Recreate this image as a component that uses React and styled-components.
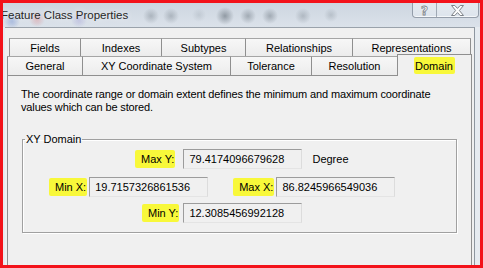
import React from 'react';
import styled, { createGlobalStyle } from 'styled-components';

const GlobalStyle = createGlobalStyle`
    html, body {
        margin: 0;
        padding: 0;
        background: #fff;
    }
    body {
        font-family: "Liberation Sans", Arial, sans-serif;
        font-size: 11px;
        color: #000;
    }
`;

const topTabs = [
    { label: 'Fields', width: 71 },
    { label: 'Indexes', width: 81 },
    { label: 'Subtypes', width: 84 },
    { label: 'Relationships', width: 107 },
    { label: 'Representations', width: 119 },
];

const bottomTabs = [
    { label: 'General', width: 75 },
    { label: 'XY Coordinate System', width: 148 },
    { label: 'Tolerance', width: 81 },
    { label: 'Resolution', width: 86 },
    { label: 'Domain', width: 75, active: true },
];

const CloseGlyph = () => (
    <svg width="13" height="11" viewBox="0 0 13 11">
        <polygon
            points="0.5,0.5 3.8,0.5 6.5,3.4 9.2,0.5 12.5,0.5 8.4,5.5 12.5,10.5 9.2,10.5 6.5,7.6 3.8,10.5 0.5,10.5 4.6,5.5"
            fill="#fdfdfd"
            stroke="#7d8288"
            strokeWidth="1"
        />
    </svg>
);

const Field = ({ label, value, gap }) => (
    <FieldWrap $gap={gap}>
        <Marker>{label}</Marker>
        <ValueBox>{value}</ValueBox>
    </FieldWrap>
);

export default function App() {
    return (
        <>
            <GlobalStyle />
            <Window>
                <TitleBar>
                    <Title>Feature Class Properties</Title>
                    <CaptionButtons>
                        <HelpButton>?</HelpButton>
                        <CloseButton>
                            <CloseGlyph />
                        </CloseButton>
                    </CaptionButtons>
                </TitleBar>
                <Frame>
                    <Client>
                        <Tabs>
                            <TabRow $indent={2}>
                                {topTabs.map((t, i) => (
                                    <Tab
                                        key={t.label}
                                        $w={t.width}
                                        $last={i === topTabs.length - 1}
                                    >
                                        {t.label}
                                    </Tab>
                                ))}
                            </TabRow>
                            <TabRow $indent={0} $front>
                                {bottomTabs.map((t) =>
                                    t.active ? (
                                        <ActiveTab key={t.label} $w={t.width}>
                                            <Marker $tab>{t.label}</Marker>
                                        </ActiveTab>
                                    ) : (
                                        <Tab key={t.label} $w={t.width}>
                                            {t.label}
                                        </Tab>
                                    )
                                )}
                            </TabRow>
                            <Panel>
                                <Description>
                                    The coordinate range or domain extent
                                    defines the minimum and maximum coordinate
                                    <br />
                                    values which can be stored.
                                </Description>
                                <GroupBox>
                                    <Legend>XY Domain</Legend>
                                    <FieldRow $indent={112} $top={3}>
                                        <Field
                                            label="Max Y:"
                                            value="79.4174096679628"
                                            gap={8}
                                        />
                                        <Unit>Degree</Unit>
                                    </FieldRow>
                                    <FieldRow $indent={26} $top={8}>
                                        <Field
                                            label="Min X:"
                                            value="19.7157326861536"
                                            gap={2}
                                        />
                                        <Spacer />
                                        <Field
                                            label="Max X:"
                                            value="86.8245966549036"
                                            gap={2}
                                        />
                                    </FieldRow>
                                    <FieldRow $indent={119} $top={6}>
                                        <Field
                                            label="Min Y:"
                                            value="12.3085456992128"
                                            gap={4}
                                        />
                                    </FieldRow>
                                </GroupBox>
                            </Panel>
                        </Tabs>
                    </Client>
                </Frame>
            </Window>
        </>
    );
}

const Window = styled.div`
    width: 483px;
    height: 268px;
    box-sizing: border-box;
    border: 3px solid #f3121a;
    background: #e6ebf0;
    display: flex;
    flex-direction: column;
    overflow: hidden;
`;

const TitleBar = styled.div`
    height: 24px;
    flex: none;
    display: flex;
    justify-content: space-between;
    align-items: flex-start;
    background:
        radial-gradient(circle at 9px 18px, rgba(70, 110, 200, 0.35), transparent 8px),
        radial-gradient(circle at 34px 16px, rgba(220, 80, 80, 0.3), transparent 8px),
        radial-gradient(circle at 76px 17px, rgba(120, 110, 200, 0.25), transparent 8px),
        radial-gradient(circle at 148px 13px, rgba(110, 120, 130, 0.4), transparent 8px),
        radial-gradient(circle at 168px 13px, rgba(110, 120, 130, 0.4), transparent 8px),
        radial-gradient(circle at 196px 12px, rgba(150, 160, 170, 0.3), transparent 7px),
        radial-gradient(circle at 222px 13px, rgba(90, 100, 110, 0.55), transparent 9px),
        radial-gradient(circle at 245px 13px, rgba(100, 110, 120, 0.45), transparent 8px),
        radial-gradient(circle at 267px 13px, rgba(100, 110, 120, 0.45), transparent 8px),
        radial-gradient(circle at 300px 13px, rgba(120, 130, 140, 0.4), transparent 8px),
        radial-gradient(circle at 328px 12px, rgba(130, 140, 150, 0.35), transparent 7px),
        linear-gradient(180deg, #cdd6e0 0%, #dbe2ea 100%);
`;

const Title = styled.div`
    margin-left: -2px;
    padding-top: 5px;
    font-size: 11.5px;
    line-height: 14px;
    color: #262626;
    text-shadow: 0 0 6px rgba(255, 255, 255, 0.95);
    white-space: nowrap;
`;

const CaptionButtons = styled.div`
    display: flex;
    margin-right: 1px;
    height: 14px;
    border: 1px solid rgba(95, 108, 124, 0.6);
    border-top: none;
    border-radius: 0 0 4px 4px;
    background: linear-gradient(180deg, rgba(255, 255, 255, 0.45), rgba(225, 232, 240, 0.7));
    box-shadow: inset 0 -1px 0 rgba(255, 255, 255, 0.7);
`;

const HelpButton = styled.div`
    width: 23px;
    display: flex;
    align-items: center;
    justify-content: center;
    border-right: 1px solid rgba(95, 108, 124, 0.5);
    font-family: "DejaVu Sans", sans-serif;
    font-weight: bold;
    font-size: 12px;
    color: #fdfdfd;
    -webkit-text-stroke: 0.8px #7d8288;
    padding-top: 1px;
`;

const CloseButton = styled.div`
    width: 41px;
    display: flex;
    align-items: center;
    justify-content: center;
    padding-top: 1px;
`;

const Frame = styled.div`
    flex: 1;
    display: flex;
    padding: 0 5px 0 2px;
    min-height: 0;
`;

const Client = styled.div`
    flex: 1;
    background: #f0f0f0;
    border-top: 1px solid #9aa2ab;
    border-right: 1px solid #8e969f;
    padding: 10px 2px 0 2px;
    overflow: hidden;
`;

const Tabs = styled.div`
    width: 465px;
    display: flex;
    flex-direction: column;
`;

const TabRow = styled.div`
    display: flex;
    height: ${({ $front }) => ($front ? '19px' : '18px')};
    padding-left: ${({ $indent }) => $indent}px;
`;

const Tab = styled.div`
    box-sizing: border-box;
    width: ${({ $w }) => $w}px;
    height: 100%;
    display: flex;
    align-items: center;
    justify-content: center;
    border-top: 1px solid #a5a5a5;
    border-left: 1px solid #8f8f8f;
    border-right: ${({ $last }) => ($last ? '1px solid #8f8f8f' : 'none')};
    background: linear-gradient(180deg, #f7f7f7 0%, #ececec 100%);
    white-space: nowrap;
`;

const ActiveTab = styled.div`
    box-sizing: border-box;
    width: ${({ $w }) => $w}px;
    height: 22px;
    margin-top: -2px;
    position: relative;
    z-index: 1;
    display: flex;
    align-items: flex-start;
    justify-content: center;
    padding-top: 2px;
    border: 1px solid #8f8f8f;
    border-bottom: none;
    background: #f0f0f0;
`;

const Panel = styled.div`
    height: 200px;
    flex: none;
    border: 1px solid #8f8f8f;
    background: #f0f0f0;
    padding: 0 14px;
`;

const Description = styled.div`
    padding: 12px 0 0 0;
    margin-left: -1px;
    line-height: 13px;
    letter-spacing: -0.14px;
    white-space: nowrap;
`;

const GroupBox = styled.fieldset`
    margin: 19px 0 0 0;
    padding: 0 0 9px 0;
    border: 1px solid #a0a0a0;
    box-shadow: 1px 1px 0 #fff, inset 1px 1px 0 #fff;
    min-inline-size: 0;
`;

const Legend = styled.legend`
    margin-left: 2px;
    padding: 0 1px;
    line-height: 13px;
`;

const FieldRow = styled.div`
    display: flex;
    align-items: center;
    height: 20px;
    margin-top: ${({ $top }) => $top}px;
    padding-left: ${({ $indent }) => $indent}px;
`;

const FieldWrap = styled.div`
    display: flex;
    align-items: center;
    gap: ${({ $gap }) => $gap}px;
`;

const Marker = styled.span`
    display: inline-flex;
    align-items: center;
    height: ${({ $tab }) => ($tab ? '17px' : '18px')};
    padding: ${({ $tab }) => ($tab ? '0 2px 0 1px' : '0 1px 0 6px')};
    background: #f8f83a;
    border-radius: 2px;
    white-space: nowrap;
`;

const ValueBox = styled.div`
    box-sizing: border-box;
    width: 119px;
    height: 20px;
    display: flex;
    align-items: center;
    padding-left: 5px;
    background: #f0f0f0;
    border: 1px solid;
    border-color: #9c9c9c #dcdcdc #e4e4e4 #9c9c9c;
    white-space: nowrap;
`;

const Unit = styled.span`
    margin-left: 10px;
`;

const Spacer = styled.div`
    width: 25px;
`;
